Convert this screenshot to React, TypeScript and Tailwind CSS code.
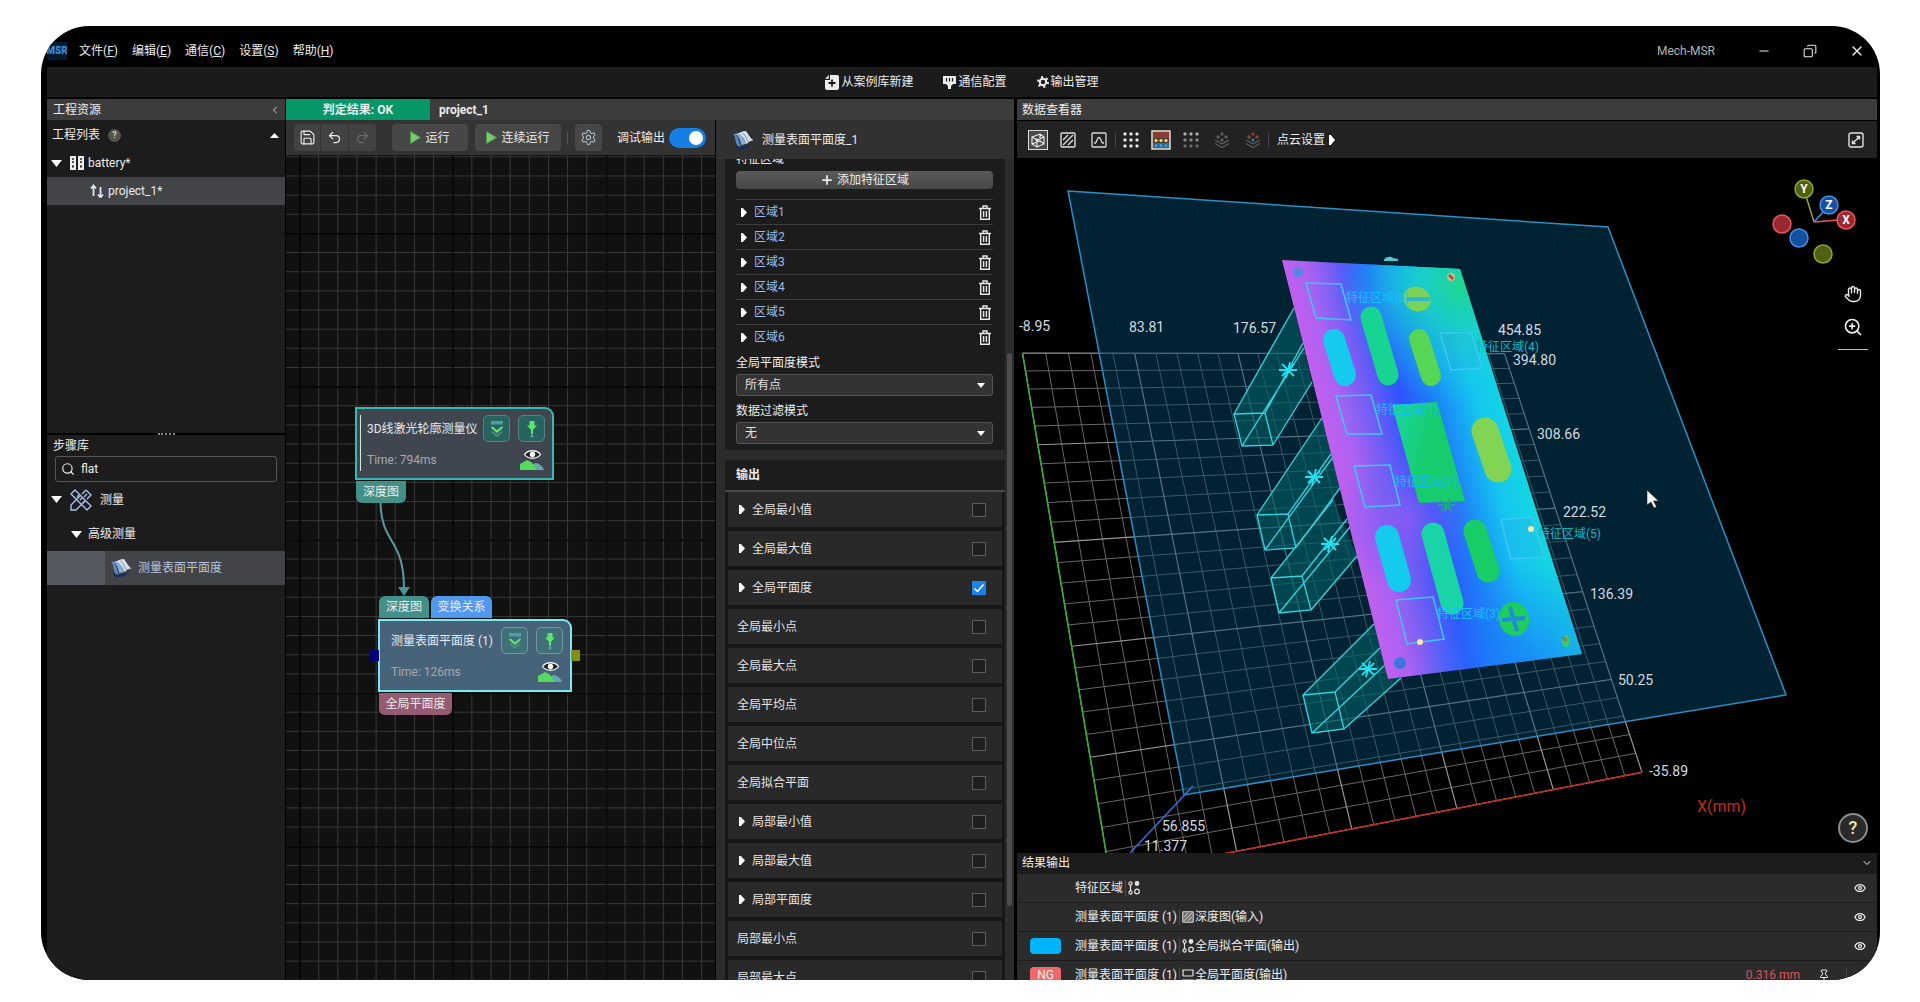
import { useState } from 'react'
import type { ReactNode } from 'react'
import {
  ChevronDown,
  ChevronLeft,
  Copy,
  Eye,
  Hand,
  Minus,
  Pin,
  Plus,
  Redo2,
  Save,
  Search,
  Settings,
  Undo2,
  X,
  ZoomIn
} from 'lucide-react'

type Point = [number, number]

const MENUS = [
  { label: '文件', hotkey: 'F' },
  { label: '编辑', hotkey: 'E' },
  { label: '通信', hotkey: 'C' },
  { label: '设置', hotkey: 'S' },
  { label: '帮助', hotkey: 'H' }
]

const REGIONS = ['区域1', '区域2', '区域3', '区域4', '区域5', '区域6']

const OUTPUTS = [
  { label: '全局最小值', expandable: true },
  { label: '全局最大值', expandable: true },
  { label: '全局平面度', expandable: true },
  { label: '全局最小点', expandable: false },
  { label: '全局最大点', expandable: false },
  { label: '全局平均点', expandable: false },
  { label: '全局中位点', expandable: false },
  { label: '全局拟合平面', expandable: false },
  { label: '局部最小值', expandable: true },
  { label: '局部最大值', expandable: true },
  { label: '局部平面度', expandable: true },
  { label: '局部最小点', expandable: false },
  { label: '局部最大点', expandable: false }
]

/* ---------- icons ---------- */

function Caret({ dir, className }: { dir: 'right' | 'down' | 'up'; className: string }) {
  const points = {
    right: '0,0 3,0 10,5 3,10 0,10',
    down: '0,0 10,0 5,10',
    up: '0,10 10,10 5,0'
  }
  return (
    <svg viewBox="0 0 10 10" preserveAspectRatio="none" className={className} fill="#fff">
      <polygon points={points[dir]} />
    </svg>
  )
}

function PlayIcon() {
  return (
    <svg viewBox="0 0 11 13" className="h-[13px] w-[11px]">
      <path d="M0.5 0.5 L10.5 6.5 L0.5 12.5 Z" fill="#7cc873" stroke="#4f9a4a" />
    </svg>
  )
}

function TrashIcon() {
  return (
    <svg viewBox="0 0 12 15" className="h-[15px] w-3" fill="none" stroke="#e8e8e8" strokeWidth="1.4">
      <path d="M0 3.5h12M4 3.2V1h4v2.2M1.7 3.8v10.4h8.6V3.8M4.6 6v6M7.4 6v6" />
    </svg>
  )
}

function SheetIcon() {
  return (
    <svg viewBox="0 0 22 20" className="h-5 w-[22px]">
      <path d="M2 15c5 2 9 2 17-1l-4 4-9 1.500z" fill="#12305e" />
      <path d="M1 4c3 0 4.500 2 5.500 5.500L8.500 17C6 17 4.500 14.500 3.800 11.500 3.200 9 3 6 1 4z" fill="#5f86bd" />
      <path d="M5 3.500C8 3 10 1 14 1c2.500 3 4 7 7.500 9.500-3 .2-5 1.500-7 3.500-2-3-2.500-8-9.500-10.500z" fill="#d5e0ec" />
      <path d="M1.500 4C7 4.500 8 10 9.500 15.500c1.500-1 3-1.500 5-1.500C12 11 11 4.500 5 3.500z" fill="#86addb" />
      <path d="M10.500 3c3 1.500 3.500 5.500 6 9" stroke="#8094ae" strokeWidth="1" fill="none" />
    </svg>
  )
}

function RulerIcon() {
  return (
    <svg viewBox="0 0 24 24" className="h-6 w-6" fill="none" stroke="#a9c0ea" strokeWidth="1.4">
      <path d="M6 2 22 18l-4 4L2 6zM8 9l2-2M11 12l2-2M14 15l2-2" />
      <path d="M17 2l5 5-4 4M13 6l4-4M11 8 2 17v5h5l9-9M18 6l-3 3" />
    </svg>
  )
}

function ServerIcon() {
  return (
    <svg viewBox="0 0 14 14" className="h-3.5 w-3.5">
      <path d="M0 0h6v14H0zM8 0h6v14H8z" fill="#eee" />
      <path d="M2 3h2M10 3h2M2 6h2M10 6h2" stroke="#222" strokeWidth="1.400" />
      <path d="M2 9.500h2v2H2zM10 9.500h2v2h-2z" fill="#222" />
    </svg>
  )
}

function CaseIcon() {
  return (
    <svg viewBox="0 0 14 15" className="h-[15px] w-3.5">
      <path d="M5 0h7a2 2 0 0 1 2 2v11a2 2 0 0 1-2 2H2a2 2 0 0 1-2-2V5h5z" fill="#ececec" />
      <path d="M0 3.800 3.800 0v3.800z" fill="#ececec" />
      <path d="M7 4.500v7M3.500 8h7" stroke="#1b1b1b" strokeWidth="1.800" />
    </svg>
  )
}

function PortIcon() {
  return (
    <svg viewBox="0 0 13 13" className="h-[13px] w-[13px]">
      <path d="M0 0h13v8h-3l-2 2v3H5v-3L3 8H0z" fill="#ececec" />
      <path d="M3.500 2v3.500M6.500 2v3.500M9.500 2v3.500" stroke="#1b1b1b" strokeWidth="1.200" />
    </svg>
  )
}

function GearIcon() {
  return (
    <svg viewBox="0 0 12 12" className="h-3 w-3" fill="none" stroke="#ececec">
      <circle cx="6" cy="6" r="3.200" strokeWidth="2" />
      <circle cx="6" cy="6" r="5" strokeWidth="2" strokeDasharray="2.100 3.130" />
    </svg>
  )
}

function HatchIcon({ className, fill }: { className: string; fill: string }) {
  return (
    <svg viewBox="0 0 16 16" className={className} fill={fill} stroke="#dcdcdc" strokeWidth="1.400">
      <rect x="1" y="1" width="14" height="14" rx="1" />
      <path d="M3 8l5-5M3 13 13 3M8 13l5-5" />
    </svg>
  )
}

function DotsIcon({ colors }: { colors: string[] }) {
  return (
    <svg viewBox="0 0 16 16" className="h-4 w-4">
      {colors.map((color, row) =>
        [2, 8, 14].map(x => <rect key={`${row}-${x}`} x={x - 1.5} y={row * 6 + 0.5} width="3" height="3" rx="1" fill={color} />)
      )}
    </svg>
  )
}

function HeightColorIcon() {
  return (
    <svg viewBox="0 0 20 20" className="h-5 w-5">
      <rect x="1" y="1" width="18" height="18" fill="#4a4038" stroke="#e8e0d4" strokeWidth="1.500" />
      <path d="M2 2h16v6H2z" fill="#8c3a38" />
      <path d="M2 13h16v5H2z" fill="#2a6a98" />
      {[5, 10, 15].map(x => (
        <g key={x}>
          <circle cx={x} cy="10.500" r="1.600" fill="#f4de64" />
          <circle cx={x} cy="15.500" r="1.300" fill="#52a4d4" />
        </g>
      ))}
    </svg>
  )
}

function LayersIcon({ colors }: { colors: string[] }) {
  return (
    <svg viewBox="0 0 16 18" className="h-[18px] w-4" fill="none">
      <circle cx="8" cy="3" r="1.700" fill={colors[0]} />
      <circle cx="4" cy="6" r="1.700" fill={colors[1]} />
      <circle cx="12" cy="6" r="1.700" fill={colors[1]} />
      <circle cx="8" cy="9" r="1.700" fill={colors[2]} />
      <path d="M1 9l7 4 7-4M1 12.500l7 4 7-4" stroke="#5c5c5c" strokeWidth="1.400" />
    </svg>
  )
}

function FeatureIcon() {
  return (
    <svg viewBox="0 0 12 14" className="h-3.5 w-3" fill="none" stroke="#e4e4e4" strokeWidth="1.200">
      <circle cx="2.500" cy="2.500" r="1.600" />
      <path d="M2.500 4v6" />
      <circle cx="2.500" cy="11.500" r="1.600" />
      <circle cx="9" cy="2.500" r="1.800" fill="#e4e4e4" />
      <circle cx="9" cy="10.500" r="2.300" />
    </svg>
  )
}

function FlatnessIcon() {
  return (
    <svg viewBox="0 0 12 14" className="h-3.5 w-3" fill="none" stroke="#e4e4e4" strokeWidth="1.200">
      <path d="M1 8V2h10v6M1 8h10M0 12h12" />
    </svg>
  )
}

/* ---------- top bars ---------- */

function TitleBar() {
  return (
    <header className="flex h-[41px] shrink-0 items-center justify-between pt-2">
      <div className="flex items-center">
        <span className="flex h-[18px] w-5 items-center justify-center overflow-hidden bg-[#04182f] text-[10px] font-black text-[#3a8fe0]">
          MSR
        </span>
        <nav className="ml-3 flex gap-3.5">
          {MENUS.map(menu => (
            <button key={menu.hotkey} type="button">
              {menu.label}(<span className="underline">{menu.hotkey}</span>)
            </button>
          ))}
        </nav>
      </div>
      <div className="flex items-center">
        <span className="mr-[42px] text-[#b4b4b4]">Mech-MSR</span>
        <div className="mr-3 flex gap-8">
          <button type="button" aria-label="最小化">
            <Minus className="h-3.5 w-3.5" />
          </button>
          <button type="button" aria-label="还原">
            <Copy className="h-3.5 w-3.5 -scale-x-100" strokeWidth={1.8} />
          </button>
          <button type="button" aria-label="关闭">
            <X className="h-4 w-4" />
          </button>
        </div>
      </div>
    </header>
  )
}

function ActionBar() {
  const actions: { label: string; icon: ReactNode }[] = [
    { label: '从案例库新建', icon: <CaseIcon /> },
    { label: '通信配置', icon: <PortIcon /> },
    { label: '输出管理', icon: <GearIcon /> }
  ]
  return (
    <div className="flex h-[30px] shrink-0 items-center justify-center gap-[30px] bg-[#1b1b1b]">
      {actions.map(action => (
        <button key={action.label} type="button" className="flex items-center gap-0.5">
          {action.icon}
          {action.label}
        </button>
      ))}
    </div>
  )
}

/* ---------- left sidebar ---------- */

function Sidebar() {
  const [query, setQuery] = useState('flat')
  return (
    <aside className="flex w-[238px] shrink-0 flex-col bg-[#1c1c1c]">
      <div className="flex h-[21px] shrink-0 items-center justify-between bg-[#3c3c3c] pl-1.5 pr-1">
        <h2>工程资源</h2>
        <ChevronLeft className="h-3 w-3 text-[#c8c8c8]" />
      </div>
      <div className="flex h-[313px] shrink-0 flex-col pt-px">
        <div className="flex h-7 items-center pl-[5px] pr-1.5">
          <h3>工程列表</h3>
          <span className="ml-2 flex h-[13px] w-[13px] items-center justify-center rounded-full bg-[#57534b] text-[9px] font-bold text-[#d9cfae]">?</span>
          <Caret dir="up" className="ml-auto h-[5px] w-[9px]" />
        </div>
        <button type="button" className="flex h-7 items-center pl-1">
          <Caret dir="down" className="mr-2 h-[7px] w-[11px]" />
          <ServerIcon />
          <span className="ml-1">battery*</span>
        </button>
        <button type="button" className="flex h-7 items-center bg-[#434448] pl-[43px]">
          <svg viewBox="0 0 14 14" className="mr-1 h-3.5 w-3.5" fill="none" stroke="#dbe8f4" strokeWidth="1.800">
            <path d="M3.500 12V2M1 4.500 3.500 1.500 6 4.500M10.500 3v10M8 10.500l2.500 3 2.500-3" />
          </svg>
          project_1*
        </button>
      </div>
      <div className="flex h-0.5 shrink-0 items-center justify-center bg-black">
        <span className="w-[17px] border-t-2 border-dotted border-[#8a8a8a]" />
      </div>
      <div className="flex flex-col">
        <label htmlFor="step-search" className="flex h-[21px] items-center pl-1.5">
          步骤库
        </label>
        <div className="mx-2 flex h-[26px] items-center rounded-[3px] border border-[#565656] px-[5px]">
          <Search className="h-3.5 w-3.5 shrink-0" />
          <input
            id="step-search"
            value={query}
            onChange={e => setQuery(e.target.value)}
            className="ml-1.5 w-full bg-transparent outline-none"
          />
        </div>
        <button type="button" className="flex h-[35px] items-center pl-1">
          <Caret dir="down" className="mr-[7px] h-[7px] w-[11px]" />
          <RulerIcon />
          <span className="ml-[7px]">测量</span>
        </button>
        <button type="button" className="flex h-[34px] items-center pl-6">
          <Caret dir="down" className="mr-1.5 h-[7px] w-[11px]" />
          高级测量
        </button>
        <button type="button" className="flex h-[34px] items-center bg-[#434448] text-[#b4c4de]">
          <span className="mr-[5px] h-full w-[58px] bg-[#55585f]" />
          <SheetIcon />
          <span className="ml-1.5">测量表面平面度</span>
        </button>
      </div>
    </aside>
  )
}

/* ---------- flow canvas ---------- */

function FlowToolbar() {
  const [debug, setDebug] = useState(true)
  return (
    <div className="flex h-[35px] items-center bg-[#333] pl-2">
      <div className="flex h-[27px] divide-x divide-[#333] overflow-hidden rounded bg-[#424242]">
        <button type="button" aria-label="保存" className="w-[27px] px-[5px]">
          <Save className="h-[17px] w-[17px]" strokeWidth={1.6} />
        </button>
        <button type="button" aria-label="撤销" className="w-7 px-1.5">
          <Undo2 className="h-[15px] w-[15px]" />
        </button>
        <button type="button" aria-label="重做" className="w-[27px] px-1.5 text-[#6a6a6a]">
          <Redo2 className="h-[15px] w-[15px]" />
        </button>
      </div>
      <button type="button" className="ml-4 flex h-[27px] w-[76px] items-center justify-center gap-1 rounded bg-[#474747]">
        <PlayIcon />
        运行
      </button>
      <button type="button" className="ml-[7px] flex h-[27px] w-[86px] items-center justify-center gap-1 rounded bg-[#474747]">
        <PlayIcon />
        连续运行
      </button>
      <span className="ml-1.5 h-3 w-px bg-[#555]" />
      <button type="button" aria-label="设置" className="ml-[7px] flex h-[27px] w-[27px] items-center justify-center rounded bg-[#474747]">
        <Settings className="h-[17px] w-[17px] text-[#a9b9c4]" strokeWidth={1.6} />
      </button>
      <label className="ml-[15px] flex items-center gap-1">
        调试输出
        <input
          type="checkbox"
          role="switch"
          checked={debug}
          onChange={e => setDebug(e.target.checked)}
          className="peer sr-only"
        />
        <span className="flex h-5 w-[37px] items-center rounded-full bg-[#666] p-[3px] peer-checked:justify-end peer-checked:bg-[#157fe6]">
          <span className="h-3.5 w-3.5 rounded-full bg-white" />
        </span>
      </label>
    </div>
  )
}

function NodeButton({ kind, active }: { kind: 'fold' | 'step'; active: boolean }) {
  return (
    <button
      type="button"
      aria-label={kind === 'fold' ? '展开' : '单步运行'}
      className={`flex h-[27px] w-[27px] items-center justify-center rounded-[5px] border ${
        active ? 'border-[#7199a4] bg-[#3f7078]' : 'border-[#54857f] bg-[#27635f]'
      }`}
    >
      {kind === 'fold' ? (
        <svg viewBox="0 0 16 18" className="h-[18px] w-4" fill="none">
          <path d="M2 1h12v3.500H2z" fill="#4f9da6" />
          <path d="M2.500 7 8 11.500 13.500 7" stroke="#6be070" strokeWidth="2.200" />
          <path d="M3 11.500 8 16l5-4.500" stroke="#4a8a80" strokeWidth="2" />
        </svg>
      ) : (
        <svg viewBox="0 0 12 18" className="h-[18px] w-3">
          <path d="M3.500 1h5v4.500h2.500L6 11 1 5.500h2.500z" fill="#5de46c" />
          <path d="M6 10v4" stroke="#5de46c" strokeWidth="2" />
          <circle cx="6" cy="16" r="1.600" fill="#5aa6ad" />
        </svg>
      )}
    </button>
  )
}

function PreviewIcon() {
  return (
    <svg viewBox="0 0 26 22" className="h-[22px] w-[26px]">
      <path d="M11 21c2-5 4-7 6-7s7 3 8 7z" fill="#62aaa8" />
      <path d="M1 21v-6l7-4 4 2c3 2 4 5 5 8z" fill="#56d95f" />
      <path d="M5.500 5.500C9 .500 18 .500 21.500 5.500 18 10.500 9 10.500 5.500 5.500z" fill="#222" stroke="#f2f2f2" strokeWidth="1.300" />
      <circle cx="13.500" cy="5.500" r="2.700" fill="#fff" />
    </svg>
  )
}

function FlowNode({ title, time, active }: { title: string; time: string; active: boolean }) {
  return (
    <div
      className={`flex h-[73px] rounded-tr-[9px] border-2 pb-[7px] pr-[7px] pt-1.5 ${
        active ? 'w-[194px] border-[#7de9ee] bg-[#47637a] pl-[11px]' : 'w-[199px] border-[#34b9b3] bg-[#40464f] pl-[3px]'
      }`}
    >
      {!active && <span className="mr-1.5 w-px bg-[#e0e0e0]" />}
      <div className="flex flex-1 flex-col justify-between">
        <div className="flex items-center">
          <span className="mr-auto text-[#e4eaf0]">{title}</span>
          <span className="flex gap-2">
            <NodeButton kind="fold" active={active} />
            <NodeButton kind="step" active={active} />
          </span>
        </div>
        <div className="flex items-center justify-between text-[#a5a9ad]">
          {time}
          <PreviewIcon />
        </div>
      </div>
    </div>
  )
}

function FlowCanvas() {
  return (
    <div className="relative flex-1 overflow-hidden bg-[#111]">
      <svg className="absolute inset-0 h-full w-full">
        <defs>
          <pattern id="minor" x="13" y="20.5" width="19.15" height="19.15" patternUnits="userSpaceOnUse">
            <path d="M0 .5H20M.5 0V20" stroke="#383838" />
          </pattern>
          <pattern id="major" x="13" y="78" width="153.2" height="153.2" patternUnits="userSpaceOnUse">
            <path d="M0 .5H154M.5 0V154" stroke="#000" strokeWidth="2" />
          </pattern>
        </defs>
        <rect width="100%" height="100%" fill="url(#minor)" />
        <rect width="100%" height="100%" fill="url(#major)" />
        <path d="M94.500 347C95 390 118 382 118 434" fill="none" stroke="#5a9a9c" strokeWidth="2" />
        <path d="M112 432h12l-6 9z" fill="#4a9492" />
      </svg>

      <div className="absolute left-[69px] top-[252px]">
        <FlowNode title="3D线激光轮廓测量仪" time="Time: 794ms" active={false} />
        <span className="ml-px mt-px flex h-[22px] w-[50px] items-center justify-center rounded-b-md bg-[#439089]">深度图</span>
      </div>

      <div className="absolute left-[92px] top-[441px]">
        <div className="mb-px ml-px flex gap-0.5">
          <span className="flex h-[22px] w-[50px] items-center justify-center rounded-t-md bg-[#439089]">深度图</span>
          <span className="flex h-[22px] w-[61px] items-center justify-center rounded-t-md bg-[#5199ee]">变换关系</span>
        </div>
        <FlowNode title="测量表面平面度 (1)" time="Time: 126ms" active />
        <span className="ml-px mt-px flex h-[22px] w-[73px] items-center justify-center rounded-b-md bg-[#955b73]">全局平面度</span>
        <span className="absolute -left-2 top-[54px] h-[11px] w-[9px] bg-[#00007c]" />
        <span className="absolute -right-2 top-[54px] h-[11px] w-[9px] bg-[#8a8c14]" />
      </div>
    </div>
  )
}

/* ---------- step properties ---------- */

function SelectField({ id, label, value }: { id: string; label: string; value: string }) {
  return (
    <div>
      <label htmlFor={id} className="flex h-[18px] items-center">
        {label}
      </label>
      <div className="relative mt-0.5">
        <select
          id={id}
          defaultValue={value}
          className="h-[22px] w-full appearance-none rounded-[3px] border border-[#555] bg-[#333] pl-2 text-[#e0e0e0] outline-none"
        >
          <option>{value}</option>
        </select>
        <Caret dir="down" className="pointer-events-none absolute right-2 top-[9px] h-[5px] w-2" />
      </div>
    </div>
  )
}

function PropertyPanel() {
  const [checked, setChecked] = useState<string[]>(['全局平面度'])

  const toggle = (label: string) => {
    setChecked(prev => (prev.includes(label) ? prev.filter(item => item !== label) : [...prev, label]))
  }

  return (
    <section className="flex w-[298px] shrink-0 flex-col bg-[#2b2b2b]">
      <div className="flex h-[39px] shrink-0 items-center bg-[#313131] pl-4">
        <SheetIcon />
        <h2 className="ml-2">测量表面平面度_1</h2>
      </div>
      <div className="flex min-h-0 flex-1 pl-[9px]">
        <div className="w-[280px] overflow-hidden">
          <div className="bg-[#1c1c1c] pb-1.5 pl-[11px] pr-3">
            <h3 className="-mt-[9px] flex h-[18px] items-center">特征区域</h3>
            <button
              type="button"
              className="mt-[3px] flex h-[18px] w-full items-center justify-center gap-[3px] rounded-sm bg-linear-to-b from-[#5a5a5a] to-[#464646]"
            >
              <Plus className="h-3.5 w-3.5" strokeWidth={3} />
              添加特征区域
            </button>
            <ul className="mt-2.5">
              {REGIONS.map(region => (
                <li key={region} className="flex h-[25px] items-center border-t border-[#3c3c3c] pl-[5px] pr-0.5 text-[#9dbbe6]">
                  <Caret dir="right" className="mr-[7px] h-[9px] w-1.5" />
                  {region}
                  <button type="button" aria-label={`删除${region}`} className="ml-auto">
                    <TrashIcon />
                  </button>
                </li>
              ))}
            </ul>
            <div className="mt-[5px] space-y-1.5">
              <SelectField id="flat-mode" label="全局平面度模式" value="所有点" />
              <SelectField id="filter-mode" label="数据过滤模式" value="无" />
            </div>
          </div>
          <h3 className="mt-2.5 flex h-8 items-center border-b-2 border-[#4a4a4a] bg-[#1c1c1c] pl-[11px] font-bold">输出</h3>
          <div className="flex flex-col gap-1 bg-[#171717] px-[3px]">
            {OUTPUTS.map(output => (
              <label
                key={output.label}
                className={`flex h-[35px] shrink-0 items-center bg-[#292929] pr-4 text-[#e4e4e4] ${output.expandable ? 'pl-[11px]' : 'pl-[9px]'}`}
              >
                {output.expandable && <Caret dir="right" className="mr-[7px] h-[9px] w-1.5" />}
                {output.label}
                <span className="relative ml-auto flex h-3.5 w-3.5">
                  <input
                    type="checkbox"
                    checked={checked.includes(output.label)}
                    onChange={() => toggle(output.label)}
                    className="peer h-3.5 w-3.5 appearance-none border border-[#5c5c5c] bg-[#1f1f1f] checked:border-[#1b84e8] checked:bg-[#1b84e8]"
                  />
                  <svg
                    viewBox="0 0 14 14"
                    className="pointer-events-none absolute inset-0 hidden h-3.5 w-3.5 peer-checked:block"
                    fill="none"
                    stroke="#fff"
                    strokeWidth="1.500"
                  >
                    <path d="M2.500 7.500 5.500 10.500 11.500 3.500" />
                  </svg>
                </span>
              </label>
            ))}
          </div>
        </div>
        <span className="ml-0.5 mt-[194px] h-[553px] w-[5px] rounded-full bg-[#4e4e4e]" />
      </div>
    </section>
  )
}

/* ---------- 3D viewer ---------- */

const GRID_CORNERS: Point[] = [
  [1022.5, 353],
  [1504.5, 353.7],
  [1642, 772.3],
  [1110, 876]
]

// Projects (u, v) of the unit square onto the floor quad
function project(u: number, v: number): Point {
  const [[x0, y0], [x1, y1], [x2, y2], [x3, y3]] = GRID_CORNERS
  const dx1 = x1 - x2
  const dx2 = x3 - x2
  const dx3 = x0 - x1 + x2 - x3
  const dy1 = y1 - y2
  const dy2 = y3 - y2
  const dy3 = y0 - y1 + y2 - y3
  const det = dx1 * dy2 - dx2 * dy1
  const g = (dx3 * dy2 - dx2 * dy3) / det
  const h = (dx1 * dy3 - dx3 * dy1) / det
  const w = g * u + h * v + 1
  return [
    ((x1 - x0 + g * x1) * u + (x3 - x0 + h * x3) * v + x0) / w,
    ((y1 - y0 + g * y1) * u + (y3 - y0 + h * y3) * v + y0) / w
  ]
}

const gridLine = (a: Point, b: Point) => `M${a[0]} ${a[1]}L${b[0]} ${b[1]}`

const STEPS = Array.from({ length: 26 }, (_, i) => i)

const gridPath = (major: boolean) =>
  STEPS.filter(i => (i % 5 === 0) === major)
    .map(i => gridLine(project(i / 25, 0), project(i / 25, 1)) + gridLine(project(0, i / 25), project(1, i / 25)))
    .join('')

const TICKS = [
  { x: 1019, y: 331, text: '-8.95' },
  { x: 1129, y: 332, text: '83.81' },
  { x: 1233, y: 333, text: '176.57' },
  { x: 1498, y: 335, text: '454.85' },
  { x: 1513, y: 365, text: '394.80' },
  { x: 1537, y: 439, text: '308.66' },
  { x: 1563, y: 517, text: '222.52' },
  { x: 1590, y: 599, text: '136.39' },
  { x: 1618, y: 685, text: '50.25' },
  { x: 1649, y: 776, text: '-35.89' },
  { x: 1162, y: 831, text: '56.855' },
  { x: 1144, y: 851, text: '11.377' }
]

const PRISMS = [
  {
    fill: '1234,414 1294,308 1312,382 1273,445 1242,446',
    lines: 'M1234 414 1265 413 1273 445 1242 446zM1234 414 1294 308M1265 413 1303 343M1242 446 1304 348M1273 445 1312 382',
    star: [1288, 370]
  },
  {
    fill: '1257,515 1322,418 1340,488 1296,548 1265,550',
    lines: 'M1257 515 1288 514 1296 548 1265 550zM1257 515 1322 418M1288 514 1331 454M1265 550 1333 457M1296 548 1340 488',
    star: [1314, 477]
  },
  {
    fill: '1271,578 1333,500 1357,556 1311,610 1279,613',
    lines: 'M1271 578 1302 576 1311 610 1279 613zM1271 578 1333 500M1302 576 1347 519M1279 613 1350 527M1311 610 1357 556',
    star: [1330, 544]
  },
  {
    fill: '1303,695 1374,624 1401,678 1344,729 1312,733',
    lines: 'M1303 695 1335 692 1344 729 1312 733zM1303 695 1374 624M1335 692 1380 648M1312 733 1385 665M1344 729 1401 678',
    star: [1368, 669]
  }
]

const SLOTS = [
  { d: 'M1334 340 1345 375', width: 22, color: '#14cbee' },
  { d: 'M1371 317 1388 375', width: 21, color: '#17d493' },
  { d: 'M1419 339 1431 376', width: 20, color: '#55d655' },
  { d: 'M1485 431 1498 469', width: 27, color: '#82d455' },
  { d: 'M1387 537 1399 580', width: 24, color: '#14cbee' },
  { d: 'M1433 534 1452 603', width: 23, color: '#18d4a6' },
  { d: 'M1475 531 1488 571', width: 23, color: '#18cc66' }
]

const FEATURES = [
  { box: '1306,283 1341,284 1351,320 1316,318', x: 1346, y: 302, text: '特征区域(6)', color: '#18c0ff' },
  { box: '1336,396 1371,395 1382,434 1347,434', x: 1376, y: 414, text: '特征区域(1)', color: '#12bcec' },
  { box: '1354,466 1390,465 1400,505 1365,507', x: 1395, y: 486, text: '特征区域(2)', color: '#12bcec' },
  { box: '1396,600 1433,597 1444,639 1407,644', x: 1437, y: 618, text: '特征区域(3)', color: '#18c0ff' },
  { box: '1440,333 1471,333 1482,368 1451,370', x: 1476, y: 351, text: '特征区域(4)', color: '#10b6c8' },
  { box: '1501,520 1532,517 1544,557 1511,559', x: 1538, y: 538, text: '特征区域(5)', color: '#10b6c8' }
]

const GIZMO = [
  { x: 1804, y: 189, fill: '#4f6010', stroke: '#8da53c', text: 'Y' },
  { x: 1829, y: 205, fill: '#1450a0', stroke: '#4a8de8', text: 'Z' },
  { x: 1846, y: 220, fill: '#9a2830', stroke: '#e8575c', text: 'X' },
  { x: 1782, y: 224, fill: '#9a2830', stroke: '#e8575c', text: '' },
  { x: 1799, y: 238, fill: '#1450a0', stroke: '#4a8de8', text: '' },
  { x: 1823, y: 254, fill: '#4f6010', stroke: '#8da53c', text: '' }
]

function Scene() {
  return (
    <svg
      viewBox="1017 158 860 695"
      preserveAspectRatio="xMinYMin slice"
      className="absolute inset-0 h-full w-full"
    >
      <defs>
        <linearGradient id="height" gradientUnits="userSpaceOnUse" x1="1331" y1="470" x2="1512" y2="424">
          <stop offset="0" stopColor="#c55fee" />
          <stop offset=".14" stopColor="#ab62f2" />
          <stop offset=".3" stopColor="#6d5cf6" />
          <stop offset=".46" stopColor="#2c55fb" />
          <stop offset=".64" stopColor="#1b84f8" />
          <stop offset=".84" stopColor="#14c6f0" />
          <stop offset="1" stopColor="#14d6e2" />
        </linearGradient>
        <radialGradient id="crest" gradientUnits="userSpaceOnUse" cx="1415" cy="275" r="85">
          <stop offset="0" stopColor="#14b4f4" stopOpacity=".9" />
          <stop offset=".4" stopColor="#1a8cf8" stopOpacity=".7" />
          <stop offset="1" stopColor="#2060fb" stopOpacity="0" />
        </radialGradient>
        <radialGradient id="warm" gradientUnits="userSpaceOnUse" cx="1462" cy="285" r="120" gradientTransform="rotate(14 1462 285)">
          <stop offset="0" stopColor="#1fd88c" />
          <stop offset=".35" stopColor="#18d6c0" stopOpacity=".8" />
          <stop offset="1" stopColor="#14c8f0" stopOpacity="0" />
        </radialGradient>
        <radialGradient id="cool" gradientUnits="userSpaceOnUse" cx="1405" cy="520" r="70">
          <stop offset="0" stopColor="#8a5cf4" stopOpacity=".8" />
          <stop offset="1" stopColor="#6a5cf4" stopOpacity="0" />
        </radialGradient>
        <radialGradient id="deep" gradientUnits="userSpaceOnUse" cx="1530" cy="670" r="110">
          <stop offset="0" stopColor="#1a80f8" stopOpacity=".8" />
          <stop offset="1" stopColor="#1a80f8" stopOpacity="0" />
        </radialGradient>
        <linearGradient id="pocket" x1="0" y1="0" x2="1" y2="0.3">
          <stop offset="0" stopColor="#1ad6a4" />
          <stop offset=".6" stopColor="#16cc6c" />
        </linearGradient>
      </defs>

      {/* floor grid */}
      <path d={gridPath(false)} stroke="#6a6663" strokeWidth="1" />
      <path d={gridPath(true)} stroke="#9a9795" strokeWidth="1.200" />
      <path d="M1022.500 353 1110 876" stroke="#2fae35" strokeWidth="1.500" />
      <path d="M1642 772.300 1110 876" stroke="#c42a20" strokeWidth="1.500" />

      {/* fitted plane */}
      <polygon points="1068,191 1608,227 1786,695 1184,795" fill="#004a70" fillOpacity=".46" stroke="#2b8fc4" strokeWidth="1.500" />
      <path d="M1193 786 1130 853" stroke="#3b6fd8" strokeWidth="1.500" />

      {PRISMS.map(prism => (
        <g key={prism.fill} stroke="#35d3de" strokeWidth="1.300" fill="none">
          <polygon points={prism.fill} fill="#006468" fillOpacity=".55" stroke="none" />
          <path d={prism.lines} />
          <path
            transform={`translate(${prism.star[0]} ${prism.star[1]})`}
            d="M-9 0H9M2-8-2 8M-6-6 6 6M6-6-6 6"
            stroke="#25e0f2"
            strokeWidth="1.800"
          />
        </g>
      ))}

      {/* height map */}
      <g>
        <path d="M1384 260c1-4 8-4 9-2l5 1v2h-14z" fill="#56c6c8" />
        {['url(#height)', 'url(#crest)', 'url(#cool)', 'url(#deep)', 'url(#warm)'].map(fill => (
          <polygon key={fill} points="1282,260 1460,269 1582,654 1388,679" fill={fill} />
        ))}
        {SLOTS.map(slot => (
          <path key={slot.d} d={slot.d} stroke={slot.color} strokeWidth={slot.width} strokeLinecap="round" />
        ))}
        <polygon points="1392,405 1437,402 1465,501 1419,503" fill="url(#pocket)" />
        <ellipse cx="1417" cy="299" rx="14" ry="12" transform="rotate(25 1417 299)" fill="#7bd45a" />
        <path d="M1406 299h24" stroke="#33b8c8" strokeWidth="4" />
        <ellipse cx="1514" cy="619" rx="15" ry="17" transform="rotate(-15 1514 619)" fill="#1ecc60" />
        <path d="M1502 620 1525 618M1510 607 1517 631" stroke="#1c8ed8" strokeWidth="4" />
        <circle cx="1298" cy="272" r="5" fill="#4a8ae8" />
        <path d="M1298 269l2 3" stroke="#d06080" strokeWidth="2" />
        <circle cx="1451" cy="277" r="4" fill="#c8b890" />
        <path d="M1449 275l4 4" stroke="#b04848" strokeWidth="2.500" />
        <circle cx="1400" cy="663" r="6" fill="#3a78e0" />
        <ellipse cx="1566" cy="641" rx="4" ry="6" fill="#40c860" />
        <path d="M1563 637l3 4" stroke="#b05870" strokeWidth="2" />
        <path d="M1438 505h17M1449 498l-4 14M1441 500l11 11M1452 500l-11 11" stroke="#18b868" strokeWidth="1.500" />
      </g>

      {FEATURES.map(feature => (
        <g key={feature.text}>
          <polygon points={feature.box} fill="#4a78f0" fillOpacity=".1" stroke="#3cc8f4" strokeWidth="1.500" />
          <text x={feature.x} y={feature.y} fontSize="12" fill={feature.color}>
            {feature.text}
          </text>
        </g>
      ))}
      <circle cx="1531" cy="529" r="3" fill="#f2f0a0" />
      <circle cx="1420" cy="642" r="3" fill="#f8e8a0" />

      {TICKS.map(tick => (
        <text key={tick.text} x={tick.x} y={tick.y} fontSize="14" fill="#d2dbe0">
          {tick.text}
        </text>
      ))}
      <text x="1697" y="812" fontSize="16" fill="#c42a20">
        X(mm)
      </text>

      {/* axis gizmo */}
      <path d="M1814 222 1806 196" stroke="#8da53c" strokeWidth="1.500" />
      <path d="M1814 222 1824 211" stroke="#4a8de8" strokeWidth="1.500" />
      <path d="M1814 222 1838 220" stroke="#e8575c" strokeWidth="1.500" />
      {GIZMO.map(axis => (
        <g key={`${axis.x}`}>
          <circle cx={axis.x} cy={axis.y} r="9" fill={axis.fill} stroke={axis.stroke} strokeWidth="1.500" />
          <text x={axis.x} y={axis.y + 4} fontSize="12" fontWeight="700" textAnchor="middle" fill="#fff">
            {axis.text}
          </text>
        </g>
      ))}

      <path d="M1647 490v15l4-3 3 6 2.500-1.200-3-5.800h5z" fill="#fff" stroke="#222" strokeWidth=".6" />
    </svg>
  )
}

function ViewerToolbar() {
  return (
    <div className="flex h-[37px] shrink-0 items-center bg-[#222] pl-[11px] pr-[13px]">
      <button type="button" aria-label="三维视图" className="flex h-5 w-5 items-center justify-center border border-[#dcdcdc] bg-[#4a4a4a]">
        <svg viewBox="0 0 16 16" className="h-4 w-4" fill="none" stroke="#f0f0f0" strokeWidth="1.100">
          <path d="M2 5l8-3 4 3v7l-7 3-5-3zM2 5l5 3 7-3M7 8v7M10 2v7l4 3M2 12l8-3" />
          <circle cx="7" cy="8" r="1" fill="#f0f0f0" />
        </svg>
      </button>
      <button type="button" aria-label="深度图" className="ml-3">
        <HatchIcon className="h-4 w-4" fill="none" />
      </button>
      <button type="button" aria-label="轮廓" className="ml-[15px]">
        <svg viewBox="0 0 16 16" className="h-4 w-4" fill="none" stroke="#dcdcdc" strokeWidth="1.300">
          <rect x="1" y="1" width="14" height="14" rx="1" />
          <path d="M3 11h1.500C6 10 6 5.500 8 5.500s2 4.500 3.500 5.500H13" />
        </svg>
      </button>
      <span className="ml-2 h-3.5 w-px bg-[#4a4a4a]" />
      <button type="button" aria-label="点云" className="ml-[7px]">
        <DotsIcon colors={['#eee', '#eee', '#eee']} />
      </button>
      <button type="button" aria-label="按高度着色" className="ml-3">
        <HeightColorIcon />
      </button>
      <button type="button" aria-label="灰度" className="ml-3">
        <DotsIcon colors={['#b0b0b0', '#8a8a8a', '#6a6a6a']} />
      </button>
      <button type="button" aria-label="图层" className="ml-[15px]">
        <LayersIcon colors={['#5c5c5c', '#5c5c5c', '#5c5c5c']} />
      </button>
      <button type="button" aria-label="彩色图层" className="ml-[15px]">
        <LayersIcon colors={['#8c3830', '#8a4a2a', '#2f6f98']} />
      </button>
      <span className="ml-[7px] h-3.5 w-px bg-[#4a4a4a]" />
      <button type="button" className="ml-2 flex items-center gap-1">
        点云设置
        <Caret dir="right" className="h-2.5 w-1.5" />
      </button>
      <button type="button" aria-label="全屏" className="ml-auto">
        <svg viewBox="0 0 16 16" className="h-4 w-4" fill="none" stroke="#e4e4e4" strokeWidth="1.400">
          <rect x="1" y="1" width="14" height="14" rx="2" />
          <path d="M4.500 11.500l7-7M8.500 4.500h3v3M4.500 8.500v3h3" />
        </svg>
      </button>
    </div>
  )
}

function ResultRow({ source, icon, name, tag, children }: { source: string; icon: ReactNode; name?: string; tag?: ReactNode; children: ReactNode }) {
  return (
    <li className="flex h-[29px] shrink-0 items-center border-t border-[#1c1c1c] bg-[#2b2b2b] pr-[11px]">
      <span className="flex w-[58px] shrink-0 pl-[13px]">{tag}</span>
      {source}
      <span className="mx-0.5 h-4 w-px bg-[#4a4a4a]" />
      {icon}
      <span className="ml-px">{name}</span>
      <span className="ml-auto flex items-center">{children}</span>
    </li>
  )
}

function Results() {
  const eye = (
    <button type="button" aria-label="显示">
      <Eye className="h-3 w-3" strokeWidth={2.5} />
    </button>
  )
  return (
    <section className="flex h-[127px] shrink-0 flex-col overflow-hidden bg-[#1c1c1c]">
      <div className="flex h-5 shrink-0 items-center justify-between pl-[5px] pr-1">
        <h2>结果输出</h2>
        <ChevronDown className="h-3 w-3" />
      </div>
      <ul className="flex flex-col">
        <ResultRow source="特征区域" icon={<FeatureIcon />}>
          {eye}
        </ResultRow>
        <ResultRow source="测量表面平面度 (1)" icon={<HatchIcon className="h-3 w-3" fill="#6a6a6a" />} name="深度图(输入)">
          {eye}
        </ResultRow>
        <ResultRow
          source="测量表面平面度 (1)"
          icon={<FeatureIcon />}
          name="全局拟合平面(输出)"
          tag={<span className="h-4 w-[31px] rounded-sm bg-[#00b4fc]" />}
        >
          {eye}
        </ResultRow>
        <ResultRow
          source="测量表面平面度 (1)"
          icon={<FlatnessIcon />}
          name="全局平面度(输出)"
          tag={<span className="flex h-4 w-[31px] items-center justify-center rounded-sm bg-[#ee6a66]">NG</span>}
        >
          <span className="text-[#d9555c]">0.316 mm</span>
          <button type="button" aria-label="固定" className="ml-[18px]">
            <Pin className="h-3 w-3" />
          </button>
          <span className="ml-4 mr-[19px] h-3.5 w-px bg-[#4a4a4a]" />
        </ResultRow>
      </ul>
    </section>
  )
}

function Viewer() {
  return (
    <main className="ml-[3px] flex min-w-0 flex-1 flex-col">
      <h2 className="mb-px flex h-[21px] shrink-0 items-center bg-[#3c3c3c] pl-[5px]">数据查看器</h2>
      <ViewerToolbar />
      <div className="relative min-h-0 flex-1 overflow-hidden bg-black">
        <Scene />
        <div className="absolute right-[9px] top-[127px] flex w-[30px] flex-col items-center">
          <button type="button" aria-label="平移">
            <Hand className="h-[18px] w-[18px]" strokeWidth={1.8} />
          </button>
          <button type="button" aria-label="放大" className="mt-3.5">
            <ZoomIn className="h-5 w-5" />
          </button>
          <span className="mt-3 h-px w-full bg-[#c8c0b8]" />
        </div>
        <button
          type="button"
          aria-label="帮助"
          className="absolute bottom-2.5 right-[9px] flex h-[30px] w-[30px] items-center justify-center rounded-full border-2 border-[#8c8c8c] bg-[#2a2a2a] text-lg font-medium text-[#f4e6a0]"
        >
          ?
        </button>
      </div>
      <Results />
    </main>
  )
}

export default function App() {
  return (
    <div className="h-screen bg-white pb-[22px] pl-[41px] pr-10 pt-[26px] font-['Roboto','Noto_Sans_CJK_SC',sans-serif] text-xs text-[#ececec]">
      <div className="flex h-full flex-col overflow-hidden rounded-[48px] bg-black pl-1.5 pr-[3px]">
        <TitleBar />
        <ActionBar />
        <div className="mt-0.5 flex min-h-0 flex-1">
          <Sidebar />
          <div className="ml-px flex shrink-0 flex-col">
            <div className="flex h-[21px] shrink-0 items-center bg-[#3c3c3c] font-bold">
              <span className="flex h-full w-36 items-center justify-center bg-[#069668]">判定结果: OK</span>
              <span className="ml-[9px]">project_1</span>
            </div>
            <div className="flex min-h-0 flex-1 gap-px">
              <div className="flex w-[429px] flex-col">
                <FlowToolbar />
                <FlowCanvas />
              </div>
              <PropertyPanel />
            </div>
          </div>
          <Viewer />
        </div>
      </div>
    </div>
  )
}
